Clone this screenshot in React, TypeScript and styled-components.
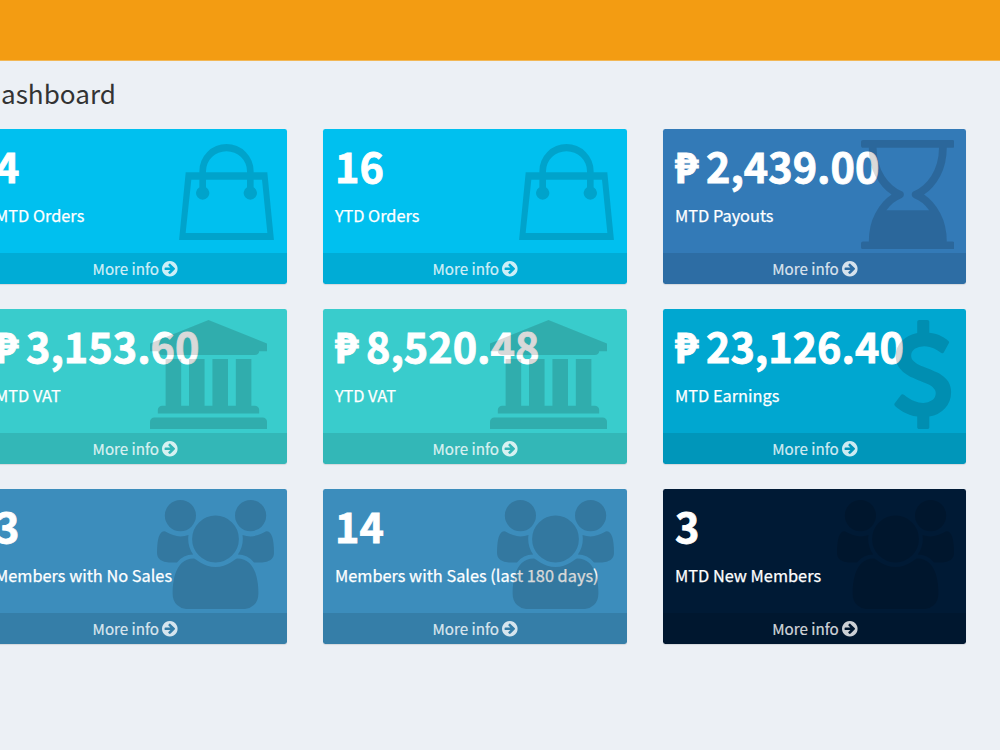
import React from "react";
import styled, { createGlobalStyle } from "styled-components";

const GlobalStyle = createGlobalStyle`
  html, body { margin: 0; padding: 0; }
  body {
    height: 750px;
    overflow: hidden;
    background: #ecf0f5;
    font-family: "Noto Sans CJK JP", "Noto Sans", sans-serif;
    color: #333;
  }
`;

const Page = styled.div`
  display: flex;
  flex-direction: column;
  width: 1000px;
  height: 750px;
  overflow: hidden;
`;

const TopBar = styled.header`
  flex: none;
  height: 60px;
  background: #f39c12;
  border-bottom: 1px solid #f2b755;
  box-sizing: content-box;
`;

const Content = styled.main`
  margin-left: -17px;
  width: 983px;
`;

const Title = styled.h1`
  box-sizing: border-box;
  margin: 0;
  padding-top: 16px;
  height: 67.8px;
  font-size: 26.1px;
  line-height: 32px;
  font-weight: 400;
`;

const Grid = styled.section`
  display: grid;
  grid-template-columns: 303.6px 303.6px 302.8px;
  column-gap: 36.4px;
  row-gap: 24.4px;
`;

const Card = styled.article<{ $color: string }>`
  position: relative;
  display: flex;
  flex-direction: column;
  height: 155.6px;
  border-radius: 2.4px;
  overflow: hidden;
  background: ${(p) => p.$color};
  color: #fff;
  box-shadow: 0 1px 1px rgba(0, 0, 0, 0.1);
`;

const CardBody = styled.div`
  box-sizing: border-box;
  height: 124.3px;
  padding: 13px 12px 12px;
`;

const Figure = styled.h3`
  display: flex;
  margin: 0 0 14.6px;
  font-size: 41.4px;
  line-height: 46px;
  font-weight: 700;
  white-space: nowrap;
  -webkit-text-stroke: 0.8px currentColor;
`;

const Peso = styled.span`
  width: 31px;
`;

const Label = styled.p`
  margin: 0;
  font-size: 16.33px;
  line-height: 26px;
  white-space: nowrap;
  -webkit-text-stroke: 0.25px currentColor;
`;

const CardIcon = styled.div<{ $top: number; $right: number }>`
  position: absolute;
  top: ${(p) => p.$top}px;
  right: ${(p) => p.$right}px;
  color: rgba(0, 0, 0, 0.15);
  svg { display: block; fill: currentColor; }
`;

const MoreLink = styled.a`
  display: flex;
  flex: 1;
  align-items: center;
  justify-content: center;
  gap: 3.4px;
  padding-left: 1px;
  background: rgba(0, 0, 0, 0.1);
  color: rgba(255, 255, 255, 0.8);
  font-size: 15.2px;
  line-height: 24px;
  svg { display: block; fill: currentColor; }
`;

const MoreText = styled.span`
  margin-top: -1.6px;
  -webkit-text-stroke: 0.2px currentColor;
`;

const ArrowCircle = () => (
  <svg width="15.600" height="15.600" viewBox="128 128 1536 1536">
    <path d="M1413 896q0-27-18-45l-362-362-91-91q-18-18-45-18t-45 18l-91 91q-18 18-18 45t18 45l189 189h-502q-26 0-45 19t-19 45v128q0 26 19 45t45 19h502l-189 189q-18 18-18 45t18 45l91 91q18 18 45 18t45-18l91-91 362-362q18-18 18-45zm251 0q0 209-103 385.5t-279.5 279.5-385.5 103-385.5-103-279.5-279.5-103-385.5 103-385.5 279.5-279.5 385.5-103 385.5 103 279.5 279.5 103 385.5z" />
  </svg>
);

const Bag = () => (
  <svg width="95" height="96.3" viewBox="0 0 285 289">
    <path
      fillRule="evenodd"
      d="M20 85H61V81.500A81.500 81.500 0 0 1 224 81.500V85H265L285 289H0ZM81 85H204V81.500A61.500 60 0 0 0 81 81.500ZM37 107L20 267H265L249 107H224V130A20 20 0 1 1 204 130V107H81V130A20 20 0 1 1 61 130V107Z"
    />
  </svg>
);

const Hourglass = () => (
  <svg width="93.600" height="109.200" viewBox="0 0 1536 1792">
    <path d="M1408 128q0 261-106.5 461.5t-266.5 306.5q160 106 266.5 306.5t106.5 461.5h96q14 0 23 9t9 23v64q0 14-9 23t-23 9h-1472q-14 0-23-9t-9-23v-64q0-14 9-23t23-9h96q0-261 106.5-461.5t266.5-306.5q-160-106-266.5-306.5t-106.5-461.5h-96q-14 0-23-9t-9-23v-64q0-14 9-23t23-9h1472q14 0 23 9t9 23v64q0 14-9 23t-23 9h-96zM874 836q77-29 149-92.5t129.5-152.5 92.5-210 35-253h-1024q0 132 35 253t92.5 210 129.5 152.5 149 92.5q19 7 30.5 23.5t11.5 36.5-11.5 36.5-30.5 23.5q-137 51-244 196h700q-107-145-244-196-19-7-30.5-23.5t-11.5-36.5 11.5-36.5 30.5-23.5z" />
  </svg>
);

const Bank = () => (
  <svg width="117" height="109.200" viewBox="0 0 1920 1792">
    <path d="M960 0l960 384v128h-128q0 26-20.5 45t-48.5 19h-1526q-28 0-48.5-19t-20.5-45h-128v-128zM256 640h256v768h128v-768h256v768h128v-768h256v768h128v-768h256v768h59q28 0 48.5 19t20.5 45v64h-1664v-64q0-26 20.5-45t48.5-19h59v-768zM1851 1600q28 0 48.5 19t20.5 45v128h-1920v-128q0-26 20.5-45t48.5-19h1782z" />
  </svg>
);

const Dollar = () => (
  <svg width="57.200" height="109.200" viewBox="424 0 939 1792">
    <path d="M1362 1185q0 153-99.5 263.5t-258.5 136.5v175q0 14-9 23t-23 9h-135q-13 0-22.5-9.5t-9.500-22.500v-175q-66-9-127.500-31t-101.500-44.500-74-48-46.500-37.500-17.500-18q-17-21-2-41l103-135q7-10 23-12 15-2 24 9l2 2q113 99 243 125 37 8 74 8 81 0 142.500-43t61.500-122q0-28-15-53t-33.500-42-58.500-37.500-66-32-80-32.500q-39-16-61.500-25t-61.500-26.500-62.500-31-56.500-35.500-53.500-42.500-43.500-49-35.500-58-21-66.500-8.500-78q0-138 98-242t255-134v-180q0-13 9.500-22.500t22.500-9.500h135q14 0 23 9t9 23v176q57 6 110.500 23t87 33.500 63.500 37.500 39 29 15 14q17 18 5 38l-81 146q-8 15-23 16-14 3-27-7-3-3-14.500-12t-39-26.500-58.500-32-74.500-26-85.500-11.500q-95 0-155 43t-60 111q0 26 8.500 48t29.500 41.500 39.500 33 56 31 60.500 27 70 27.500q53 20 81 31.500t76 35 75.500 42.500 62 50 53 63.500 31.500 76.500 13 94z" />
  </svg>
);

const Users = () => (
  <svg width="117" height="109.200" viewBox="-64 0 1920 1792">
    <path d="M529 896q-162 5-265 128h-134q-82 0-138-40.500t-56-118.500q0-353 124-353 6 0 43.500 21t97.500 42.500 119 21.500q67 0 133-23-5 37-5 66 0 139 81 256zm1071 637q0 120-73 189.500t-194 69.500h-874q-121 0-194-69.500t-73-189.500q0-53 3.500-103.500t14-109 26.500-108.500 43-97.500 62-81 85.500-53.500 111.500-20q10 0 43 21.500t73 48 107 48 135 21.500 135-21.500 107-48 73-48 43-21.500q61 0 111.500 20t85.500 53.500 62 81 43 97.500 26.500 108.500 14 109 3.500 103.500zm-1024-1277q0 106-75 181t-181 75-181-75-75-181 75-181 181-75 181 75 75 181zm704 384q0 159-112.500 271.500t-271.500 112.500-271.500-112.500-112.500-271.500 112.500-271.500 271.500-112.500 271.500 112.500 112.500 271.500zm576 225q0 78-56 118.500t-138 40.500h-134q-103-123-265-128 81-117 81-256 0-29-5-66 66 23 133 23 59 0 119-21.500t97.500-42.500 43.500-21q124 0 124 353zm-128-609q0 106-75 181t-181 75-181-75-75-181 75-181 181-75 181 75 75 181z" />
  </svg>
);

const icons = {
  bag: { draw: Bag, top: 15.4, right: 12.8 },
  hourglass: { draw: Hourglass, top: 10.8, right: 11.4 },
  bank: { draw: Bank, top: 10.8, right: 19.9 },
  dollar: { draw: Dollar, top: 10.8, right: 14.2 },
  users: { draw: Users, top: 10.8, right: 12.2 },
};

type CardData = {
  value: string;
  peso?: boolean;
  label: string;
  color: string;
  icon: keyof typeof icons;
};

const cards: CardData[] = [
  { value: "4", label: "MTD Orders", color: "#00c0ef", icon: "bag" },
  { value: "16", label: "YTD Orders", color: "#00c0ef", icon: "bag" },
  { value: "2,439.00", peso: true, label: "MTD Payouts", color: "#337ab7", icon: "hourglass" },
  { value: "3,153.60", peso: true, label: "MTD VAT", color: "#39cccc", icon: "bank" },
  { value: "8,520.48", peso: true, label: "YTD VAT", color: "#39cccc", icon: "bank" },
  { value: "23,126.40", peso: true, label: "MTD Earnings", color: "#00a7d0", icon: "dollar" },
  { value: "3", label: "Members with No Sales", color: "#3c8dbc", icon: "users" },
  { value: "14", label: "Members with Sales (last 180 days)", color: "#3c8dbc", icon: "users" },
  { value: "3", label: "MTD New Members", color: "#001a35", icon: "users" },
];

const StatCard = ({ value, peso, label, color, icon }: CardData) => {
  const { draw: Icon, top, right } = icons[icon];
  return (
    <Card $color={color}>
      <CardBody>
        <Figure>
          {peso && <Peso>₱</Peso>}
          <span>{value}</span>
        </Figure>
        <Label>{label}</Label>
      </CardBody>
      <CardIcon $top={top} $right={right}>
        <Icon />
      </CardIcon>
      <MoreLink>
        <MoreText>More info</MoreText>
        <ArrowCircle />
      </MoreLink>
    </Card>
  );
};

export default function App() {
  return (
    <Page>
      <GlobalStyle />
      <TopBar />
      <Content>
        <Title>Dashboard</Title>
        <Grid>
          {cards.map((card) => (
            <StatCard key={card.label} {...card} />
          ))}
        </Grid>
      </Content>
    </Page>
  );
}
